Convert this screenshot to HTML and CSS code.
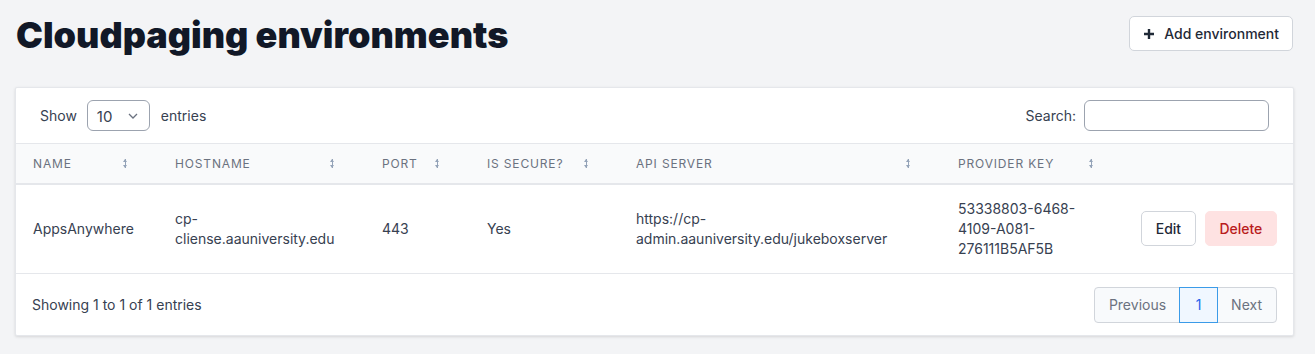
FILE: index.html
```html
<!DOCTYPE html>
<html>

<head>
    <meta charset="UTF-8">
    <meta name="viewport" content="width=device-width, initial-scale=1.0">
    <title>Cloudpaging environments</title>
    <link rel="stylesheet" href="styles.css">
</head>

<body>
    <div class="page">
        <div class="page-head">
            <h1 class="title">Cloudpaging environments</h1>
            <button class="btn btn-add">
                <svg class="plus" width="12" height="12" viewBox="0 0 12 12">
                    <path d="M6 1v10M1 6h10" stroke="#1f2937" stroke-width="2.4" />
                </svg>
                Add environment
            </button>
        </div>

        <div class="card">
            <div class="toolbar">
                <label class="length">
                    Show
                    <span class="select">
                        10
                        <svg width="10" height="6" viewBox="0 0 10 6">
                            <path d="M1 1l4 4 4-4" fill="none" stroke="#6b7280" stroke-width="1.3" />
                        </svg>
                    </span>
                    entries
                </label>
                <label class="search">
                    Search:
                    <input type="text">
                </label>
            </div>

            <table class="envs">
                <colgroup>
                    <col style="width: 142px">
                    <col style="width: 207px">
                    <col style="width: 105px">
                    <col style="width: 149px">
                    <col style="width: 322px">
                    <col style="width: 183px">
                    <col>
                </colgroup>
                <thead>
                    <tr>
                        <th><span class="th-in">Name <i class="sort"></i></span></th>
                        <th><span class="th-in">Hostname <i class="sort"></i></span></th>
                        <th><span class="th-in">Port <i class="sort"></i></span></th>
                        <th><span class="th-in">Is secure? <i class="sort"></i></span></th>
                        <th><span class="th-in">API server <i class="sort"></i></span></th>
                        <th><span class="th-in">Provider key <i class="sort"></i></span></th>
                        <th></th>
                    </tr>
                </thead>
                <tbody>
                    <tr>
                        <td>AppsAnywhere</td>
                        <td>cp-<br>cliense.aauniversity.edu</td>
                        <td>443</td>
                        <td>Yes</td>
                        <td>https://cp-<br>admin.aauniversity.edu/jukeboxserver</td>
                        <td>53338803-6468-<br>4109-A081-<br>276111B5AF5B</td>
                        <td class="actions">
                            <div class="action-row">
                                <button class="btn btn-edit">Edit</button>
                                <button class="btn btn-delete">Delete</button>
                            </div>
                        </td>
                    </tr>
                </tbody>
            </table>

            <div class="footer">
                <span class="info">Showing 1 to 1 of 1 entries</span>
                <div class="pager">
                    <span class="page-btn">Previous</span>
                    <span class="page-btn current">1</span>
                    <span class="page-btn">Next</span>
                </div>
            </div>
        </div>
    </div>
</body>

</html>
```

FILE: styles.css
```css
* {
    box-sizing: border-box;
}

body {
    margin: 0;
    background-color: #f3f4f6;
    font-family: Inter, "Noto Sans", sans-serif;
    color: #374151;
    font-size: 14px;
}

.page {
    padding: 16px 21px 16px 15px;
}

/* heading row */
.page-head {
    display: flex;
    justify-content: space-between;
    align-items: flex-start;
    margin-bottom: 33px;
}

.title {
    margin: 0;
    margin-left: 1px;
    font-size: 36px;
    font-weight: 900;
    line-height: 38px;
    color: #111827;
}

.btn {
    font-family: inherit;
    font-size: 14px;
    font-weight: 500;
    border-radius: 5px;
    cursor: pointer;
    white-space: nowrap;
}

.btn-add {
    display: flex;
    align-items: center;
    gap: 9px;
    height: 35px;
    margin-right: 1px;
    padding: 0 13px;
    background: #fff;
    border: 1px solid #d1d5db;
    color: #1f2937;
}

/* card */
.card {
    background: #fff;
    border: 1px solid #e5e7eb;
    border-radius: 2px;
    box-shadow: 0 1px 3px rgba(0, 0, 0, 0.12);
}

.toolbar {
    display: flex;
    justify-content: space-between;
    align-items: center;
    padding: 12px 24px 12px 24px;
}

.length,
.search {
    display: flex;
    align-items: center;
    color: #374151;
}

.select {
    display: flex;
    align-items: center;
    justify-content: space-between;
    width: 63px;
    height: 31px;
    margin: 0 11px 0 10px;
    padding: 1px 11px 0 9px;
    border: 1px solid #9ca3af;
    border-radius: 6px;
    font-size: 15px;
}

.search input {
    width: 185px;
    height: 31px;
    margin-left: 8px;
    border: 1px solid #9ca3af;
    border-radius: 6px;
}

/* table */
.envs {
    width: 100%;
    border-collapse: collapse;
    table-layout: fixed;
}

.envs th {
    height: 40px;
    padding: 0 0 0 17px;
    background: #f9fafb;
    border-top: 1px solid #e5e7eb;
    border-bottom: 2px solid #e5e7eb;
    text-align: left;
    font-size: 12px;
    font-weight: 400;
    letter-spacing: 0.07em;
    text-transform: uppercase;
    color: #6b7280;
}

.th-in {
    display: flex;
    justify-content: space-between;
    align-items: center;
    padding-right: 30px;
}

.sort {
    display: block;
    width: 5px;
    height: 9px;
    background:
        linear-gradient(#94a3b8, #94a3b8) center / 1px 9px no-repeat;
    position: relative;
}

.sort::before,
.sort::after {
    content: "";
    position: absolute;
    left: 0;
    border-left: 2.5px solid transparent;
    border-right: 2.5px solid transparent;
}

.sort::before {
    top: 0;
    border-bottom: 3px solid #94a3b8;
}

.sort::after {
    bottom: 0;
    border-top: 3px solid #94a3b8;
}

.envs td {
    padding: 14px 0 14px 17px;
    line-height: 20px;
    vertical-align: middle;
    border-bottom: 1px solid #e5e7eb;
    color: #374151;
}

.envs td.actions {
    padding-right: 16px;
}

.action-row {
    display: flex;
    justify-content: flex-end;
    gap: 9px;
}

.btn-edit {
    height: 35px;
    width: 56px;
    background: #fff;
    border: 1px solid #d1d5db;
    color: #1f2937;
}

.btn-delete {
    height: 35px;
    width: 74px;
    background: #fee2e2;
    border: 1px solid #fee2e2;
    color: #b91c1c;
}

/* footer */
.footer {
    display: flex;
    justify-content: space-between;
    align-items: center;
    padding: 13px 16px 12px 16px;
}

.info {
    color: #374151;
}

.pager {
    display: flex;
    height: 36px;
    border: 1px solid #d1d5db;
    border-radius: 4px;
    background: #f8fafc;
}

.page-btn {
    display: flex;
    align-items: center;
    padding: 0 14px;
    color: #6b7280;
}

.page-btn.current {
    width: 37px;
    justify-content: center;
    color: #2563eb;
    background: #f0f7ff;
    outline: 1px solid #3b9be8;
}
```
